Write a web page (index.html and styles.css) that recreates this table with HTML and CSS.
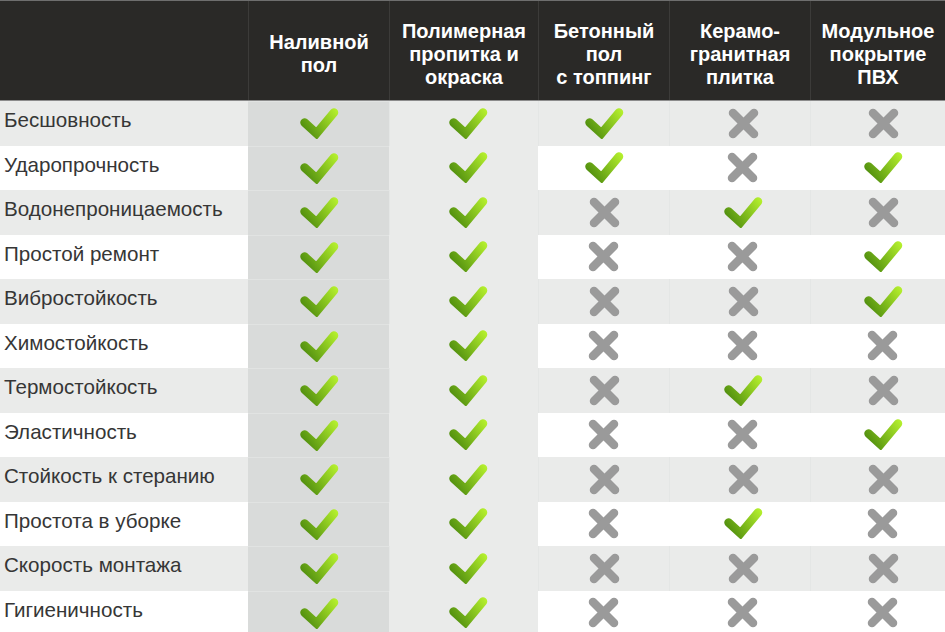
FILE: index.html
```html
<!DOCTYPE html>
<html lang="ru">
<head>
<meta charset="utf-8">
<title>Сравнение покрытий</title>
<link rel="stylesheet" href="styles.css">
</head>
<body>
<svg class="defs" width="0" height="0" aria-hidden="true">
  <defs>
    <linearGradient id="grn" gradientUnits="userSpaceOnUse" x1="4" y1="27" x2="38" y2="3">
      <stop offset="0" stop-color="#48860c"/>
      <stop offset="1" stop-color="#b4ef2d"/>
    </linearGradient>
    <symbol id="chk" viewBox="0 0 40 31">
      <polyline points="5.5,14.5 17.5,25.5 35,4.5" fill="none" stroke="url(#grn)" stroke-width="8.5" stroke-linejoin="miter" stroke-linecap="round"/>
    </symbol>
    <symbol id="crs" viewBox="0 0 31 31">
      <line x1="5" y1="5" x2="26" y2="26" stroke="#9a9a9a" stroke-width="8.5" stroke-linecap="round"/>
      <line x1="26" y1="5" x2="5" y2="26" stroke="#9a9a9a" stroke-width="8.5" stroke-linecap="round"/>
    </symbol>
  </defs>
</svg>
<div class="table">
  <div class="head">
    <div class="hc"></div>
    <div class="hc">Наливной<br>пол</div>
    <div class="hc">Полимерная<br>пропитка и<br>окраска</div>
    <div class="hc">Бетонный<br>пол<br>с топпинг</div>
    <div class="hc">Керамо-<br>гранитная<br>плитка</div>
    <div class="hc">Модульное<br>покрытие<br>ПВХ</div>
  </div>
  <div id="body"></div>
</div>
<script src="app.js"></script>
</body>
</html>
```
FILE: app.js
```js
const rows = [
  ["Бесшовность", 1,1,1,0,0],
  ["Ударопрочность", 1,1,1,0,1],
  ["Водонепроницаемость", 1,1,0,1,0],
  ["Простой ремонт", 1,1,0,0,1],
  ["Вибростойкость", 1,1,0,0,1],
  ["Химостойкость", 1,1,0,0,0],
  ["Термостойкость", 1,1,0,1,0],
  ["Эластичность", 1,1,0,0,1],
  ["Стойкость к стеранию", 1,1,0,0,0],
  ["Простота в уборке", 1,1,0,1,0],
  ["Скорость монтажа", 1,1,0,0,0],
  ["Гигиеничность", 1,1,0,0,0]
];
const body = document.getElementById("body");
let html = "";
rows.forEach((r, i) => {
  html += '<div class="row ' + (i % 2 === 0 ? "odd" : "even") + '">';
  html += '<div class="label">' + r[0] + '</div>';
  for (let c = 1; c <= 5; c++) {
    const ok = r[c] === 1;
    html += '<div class="cell c' + c + '">' +
      (ok ? '<svg class="chk"><use href="#chk"/></svg>' : '<svg class="crs"><use href="#crs"/></svg>') +
      '</div>';
  }
  html += '</div>';
});
body.innerHTML = html;
```
FILE: styles.css
```css
html, body {
  margin: 0;
  padding: 0;
}
body {
  width: 945px;
  height: 632px;
  overflow: hidden;
  background: #ffffff;
  font-family: "Liberation Sans", Arial, sans-serif;
}
.defs {
  position: absolute;
  width: 0;
  height: 0;
}
.table {
  width: 945px;
}
.head, .row {
  display: grid;
  grid-template-columns: 248px 141px 149px 131px 141px 135px;
}
.head {
  height: 99px;
  background: #2a2927;
  border-top: 1px solid #6e6e6e;
  border-bottom: 1px solid #8c8c8c;
}
.hc {
  display: flex;
  align-items: center;
  justify-content: center;
  text-align: center;
  color: #ffffff;
  font-weight: bold;
  font-size: 20px;
  line-height: 23px;
  padding-top: 7px;
  box-sizing: border-box;
}
.hc + .hc {
  border-left: 1px solid #3c3b39;
}
.row {
  height: 44.5px;
}
.row.odd {
  background: #eaebea;
}
.row.even {
  background: #ffffff;
}
.label {
  display: flex;
  align-items: center;
  padding-left: 4px;
  padding-bottom: 6px;
  box-sizing: border-box;
  font-size: 20.6px;
  color: #363636;
}
.cell {
  display: flex;
  align-items: center;
  justify-content: center;
}
.row.odd .cell + .cell {
  border-left: 1px solid #e4e6e5;
}
.cell.c1 {
  background: #d9dbda;
  border-top: 1px solid #e1e3e2;
  box-sizing: border-box;
}
.cell.c2 {
  background: #eaebea;
  padding-left: 8px;
}
.cell.c4 {
  padding-left: 6px;
}
.cell.c5 {
  padding-left: 10px;
}
.chk {
  width: 40px;
  height: 31px;
}
.crs {
  width: 31px;
  height: 31px;
}
```
